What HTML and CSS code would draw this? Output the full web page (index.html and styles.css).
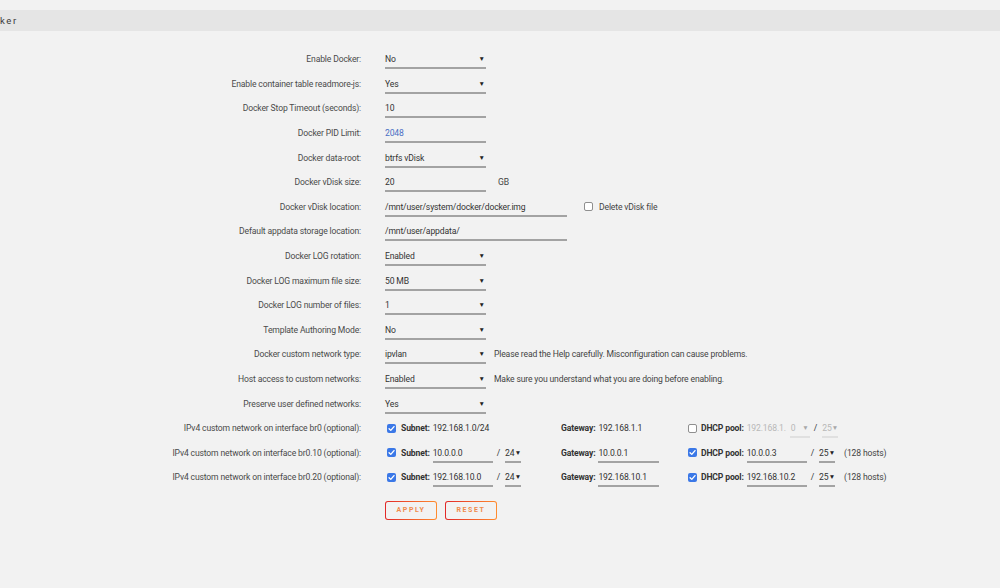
FILE: index.html
```html
<!DOCTYPE html>
<html lang="en">
<head>
<meta charset="utf-8">
<title>Docker Settings</title>
<link rel="stylesheet" href="styles.css">
</head>
<body>
<div class="titlebar"><span class="title">ker</span></div>
<form class="settings">
  <div class="row"><label class="lbl">Enable Docker:</label><div class="ctl"><span class="field sel">No</span></div></div>
  <div class="row"><label class="lbl">Enable container table readmore-js:</label><div class="ctl"><span class="field sel">Yes</span></div></div>
  <div class="row"><label class="lbl">Docker Stop Timeout (seconds):</label><div class="ctl"><span class="field">10</span></div></div>
  <div class="row"><label class="lbl">Docker PID Limit:</label><div class="ctl"><span class="field ph">2048</span></div></div>
  <div class="row"><label class="lbl">Docker data-root:</label><div class="ctl"><span class="field sel">btrfs vDisk</span></div></div>
  <div class="row"><label class="lbl">Docker vDisk size:</label><div class="ctl"><span class="field">20</span><span class="unit">GB</span></div></div>
  <div class="row"><label class="lbl">Docker vDisk location:</label><div class="ctl"><span class="field wide">/mnt/user/system/docker/docker.img</span><span class="cb off"></span><span class="cbtext">Delete vDisk file</span></div></div>
  <div class="row"><label class="lbl">Default appdata storage location:</label><div class="ctl"><span class="field wide">/mnt/user/appdata/</span></div></div>
  <div class="row"><label class="lbl">Docker LOG rotation:</label><div class="ctl"><span class="field sel">Enabled</span></div></div>
  <div class="row"><label class="lbl">Docker LOG maximum file size:</label><div class="ctl"><span class="field sel">50 MB</span></div></div>
  <div class="row"><label class="lbl">Docker LOG number of files:</label><div class="ctl"><span class="field sel">1</span></div></div>
  <div class="row"><label class="lbl">Template Authoring Mode:</label><div class="ctl"><span class="field sel">No</span></div></div>
  <div class="row"><label class="lbl">Docker custom network type:</label><div class="ctl"><span class="field sel">ipvlan</span><span class="hint">Please read the Help carefully. Misconfiguration can cause problems.</span></div></div>
  <div class="row"><label class="lbl">Host access to custom networks:</label><div class="ctl"><span class="field sel">Enabled</span><span class="hint">Make sure you understand what you are doing before enabling.</span></div></div>
  <div class="row"><label class="lbl">Preserve user defined networks:</label><div class="ctl"><span class="field sel">Yes</span></div></div>

  <div class="row"><label class="lbl">IPv4 custom network on interface br0 (optional):</label>
    <div class="ctl net">
      <div class="seg seg-sub"><span class="cb on"><svg viewBox="0 0 10 10"><path d="M2.3 5.2l1.9 1.9 3.6-4.2" fill="none" stroke="#fff" stroke-width="1.5" stroke-linecap="round" stroke-linejoin="round"/></svg></span><b class="k">Subnet:</b><span class="plain">192.168.1.0/24</span></div>
      <div class="seg seg-gw"><b class="k">Gateway:</b><span class="plain">192.168.1.1</span></div>
      <div class="seg seg-dh"><span class="cb off"></span><b class="k">DHCP pool:</b><span class="plain dim">192.168.1.</span><span class="field mini dis sel">0</span><span class="slash">/</span><span class="field pre dis sel">25</span></div>
    </div>
  </div>
  <div class="row"><label class="lbl">IPv4 custom network on interface br0.10 (optional):</label>
    <div class="ctl net">
      <div class="seg seg-sub"><span class="cb on"><svg viewBox="0 0 10 10"><path d="M2.3 5.2l1.9 1.9 3.6-4.2" fill="none" stroke="#fff" stroke-width="1.5" stroke-linecap="round" stroke-linejoin="round"/></svg></span><b class="k">Subnet:</b><span class="field ip">10.0.0.0</span><span class="slash">/</span><span class="field pre sel">24</span></div>
      <div class="seg seg-gw"><b class="k">Gateway:</b><span class="field ip">10.0.0.1</span></div>
      <div class="seg seg-dh"><span class="cb on"><svg viewBox="0 0 10 10"><path d="M2.3 5.2l1.9 1.9 3.6-4.2" fill="none" stroke="#fff" stroke-width="1.5" stroke-linecap="round" stroke-linejoin="round"/></svg></span><b class="k">DHCP pool:</b><span class="field ip">10.0.0.3</span><span class="slash">/</span><span class="field pre sel">25</span><span class="hosts">(128 hosts)</span></div>
    </div>
  </div>
  <div class="row"><label class="lbl">IPv4 custom network on interface br0.20 (optional):</label>
    <div class="ctl net">
      <div class="seg seg-sub"><span class="cb on"><svg viewBox="0 0 10 10"><path d="M2.3 5.2l1.9 1.9 3.6-4.2" fill="none" stroke="#fff" stroke-width="1.5" stroke-linecap="round" stroke-linejoin="round"/></svg></span><b class="k">Subnet:</b><span class="field ip">192.168.10.0</span><span class="slash">/</span><span class="field pre sel">24</span></div>
      <div class="seg seg-gw"><b class="k">Gateway:</b><span class="field ip">192.168.10.1</span></div>
      <div class="seg seg-dh"><span class="cb on"><svg viewBox="0 0 10 10"><path d="M2.3 5.2l1.9 1.9 3.6-4.2" fill="none" stroke="#fff" stroke-width="1.5" stroke-linecap="round" stroke-linejoin="round"/></svg></span><b class="k">DHCP pool:</b><span class="field ip">192.168.10.2</span><span class="slash">/</span><span class="field pre sel">25</span><span class="hosts">(128 hosts)</span></div>
    </div>
  </div>

  <div class="buttons">
    <button type="button" class="btn"><span>APPLY</span></button>
    <button type="button" class="btn"><span>RESET</span></button>
  </div>
</form>
</body>
</html>
```

FILE: styles.css
```css
html, body {
  margin: 0;
  padding: 0;
  background: #f2f2f2;
  font-family: Roboto, "Liberation Sans", sans-serif;
  font-size: 8.6px;
  letter-spacing: -0.15px;
  color: #3c3c3c;
  width: 1000px;
  height: 588px;
  overflow: hidden;
}

.titlebar {
  margin-top: 10px;
  height: 21px;
  background: #e5e5e5;
  display: flex;
  align-items: center;
}
.title {
  font-size: 9.5px;
  letter-spacing: 1.6px;
  color: #3a3a3a;
  padding-bottom: 1px;
}

.settings {
  padding-top: 16px;
}

.row {
  display: grid;
  grid-template-columns: 361px 1fr;
  column-gap: 24px;
  align-items: center;
  height: 24.6px;
}
.lbl {
  text-align: right;
  color: #4a4a4a;
  white-space: nowrap;
}
.ctl {
  display: flex;
  align-items: center;
  white-space: nowrap;
  height: 100%;
}

.field {
  position: relative;
  display: inline-block;
  box-sizing: border-box;
  width: 101px;
  height: 17px;
  line-height: 14px;
  margin-top: 3px;
  border-bottom: 2px solid #a3a3a3;
  color: #333;
}
.field.wide { width: 182px; }
.field.ph { color: #4a6fc4; }
.field.sel::after {
  content: "\25BC";
  position: absolute;
  right: 1px;
  top: 0;
  font-size: 6.5px;
  line-height: 14px;
  letter-spacing: 0;
  color: #222;
}
.unit { margin-left: 12px; color: #444; }

.cb {
  display: inline-block;
  box-sizing: border-box;
  width: 9px;
  height: 9px;
  border-radius: 2px;
  flex: none;
}
.cb svg { display: block; width: 9px; height: 9px; }
.cb.off { background: #fff; border: 1px solid #8f8f8f; }
.cb.on { background: #3b78e7; }

.field.wide + .cb { margin-left: 17px; }
.cbtext { margin-left: 6px; color: #444; }
.hint { margin-left: 8px; color: #444; }

.seg { display: flex; align-items: center; flex: none; height: 100%; }
.seg-sub { width: 176px; }
.seg-sub .cb { margin-left: 2px; margin-right: 5px; }
.seg-gw { width: 127px; }
.seg-dh .cb { margin-left: 0; margin-right: 4px; }
.k { font-weight: bold; color: #333; margin-right: 3px; }
.plain { color: #333; }
.plain.dim { color: #b8b8b8; }
.field.ip { width: 60px; }
.seg-gw .field.ip { width: 61px; }
.slash { margin: 0 5px 0 4px; color: #333; }
.field.pre { width: 16px; }
.field.pre.sel::after { right: 0; }
.field.mini { width: 20px; margin-left: 4px; padding-left: 1px; }
.field.dis { color: #b8b8b8; border-bottom-color: #e0e0e0; }
.field.dis.sel::after { color: #a8a8a8; }
.hosts { margin-left: 9px; color: #444; }

.buttons {
  display: flex;
  gap: 8px;
  margin-left: 385px;
  margin-top: 11px;
}
.btn {
  box-sizing: border-box;
  width: 52px;
  height: 19px;
  padding: 1px;
  border: none;
  border-radius: 3px;
  background: linear-gradient(90deg, #e22828 0%, #ff8c2f 100%);
  cursor: pointer;
  font-family: inherit;
}
.btn span {
  display: flex;
  align-items: center;
  justify-content: center;
  width: 100%;
  height: 100%;
  border-radius: 2px;
  background: #f2f2f2;
  font-size: 7px;
  font-weight: bold;
  letter-spacing: 1.6px;
  color: #f08a4b;
}
```
